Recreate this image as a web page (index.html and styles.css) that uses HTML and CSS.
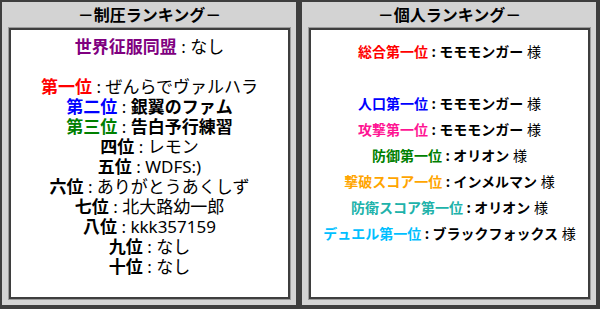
FILE: index.html
```html
<!DOCTYPE html>
<html lang="ja">
<head>
<meta charset="utf-8">
<link rel="stylesheet" href="styles.css">
</head>
<body>
<div class="wrap">
  <section class="panel">
    <h2 class="head">－制圧ランキング－</h2>
    <div class="box box-left">
      <div class="line"><b class="purple">世界征服同盟</b> : なし</div>
      <div class="line">&nbsp;</div>
      <div class="line"><b class="red">第一位</b> : ぜんらでヴァルハラ</div>
      <div class="line"><b class="blue">第二位</b> : <b>銀翼のファム</b></div>
      <div class="line"><b class="green">第三位</b> : <b>告白予行練習</b></div>
      <div class="line"><b>四位</b> : レモン</div>
      <div class="line"><b>五位</b> : WDFS:)</div>
      <div class="line"><b>六位</b> : ありがとうあくしず</div>
      <div class="line"><b>七位</b> : 北大路幼一郎</div>
      <div class="line"><b>八位</b> : kkk357159</div>
      <div class="line"><b>九位</b> : なし</div>
      <div class="line"><b>十位</b> : なし</div>
    </div>
  </section>
  <section class="panel">
    <h2 class="head">－個人ランキング－</h2>
    <div class="box box-right">
      <div class="row"><b class="red">総合第一位</b> <b>: モモモンガー</b> 様</div>
      <div class="row">&nbsp;</div>
      <div class="row"><b class="blue">人口第一位</b> <b>: モモモンガー</b> 様</div>
      <div class="row"><b class="pink">攻撃第一位</b> <b>: モモモンガー</b> 様</div>
      <div class="row"><b class="green">防御第一位</b> <b>: オリオン</b> 様</div>
      <div class="row"><b class="orange">撃破スコア一位</b> <b>: インメルマン</b> 様</div>
      <div class="row"><b class="teal">防衛スコア第一位</b> <b>: オリオン</b> 様</div>
      <div class="row"><b class="sky">デュエル第一位</b> <b>: ブラックフォックス</b> 様</div>
    </div>
  </section>
</div>
</body>
</html>
```
FILE: styles.css
```css
html, body {
  margin: 0;
  padding: 0;
  background: #ffffff;
}
body {
  font-family: "Noto Sans", "Noto Sans CJK JP", sans-serif;
  color: #000;
}
.wrap {
  display: flex;
  width: 600px;
  height: 309px;
}
.panel {
  box-sizing: border-box;
  width: 300px;
  height: 309px;
  border-style: solid;
  border-color: #3e3e3e;
  border-width: 2px 4px 4px 2px;
  background: #d3d3d3;
  padding: 0 5px 5px 6px;
  display: flex;
  flex-direction: column;
}
.head {
  margin: 0;
  height: 25px;
  line-height: 25px;
  font-size: 16px;
  font-weight: bold;
  text-align: center;
  font-family: "Noto Sans CJK JP", sans-serif;
}
.box {
  flex: 1;
  margin: 1px;
  background: #fff;
  border: 2px solid #3e3e3e;
  box-shadow: 0 0 0 1px #9a9a9a;
  text-align: center;
}
.box-left {
  padding-top: 7px;
  font-size: 17px;
  line-height: 20px;
}
.box-right {
  padding-top: 9px;
  font-size: 14px;
  line-height: 26px;
}
.line, .row {
  white-space: nowrap;
}
b {
  font-weight: bold;
}
.purple { color: #800080; }
.red { color: #ff0000; }
.blue { color: #0000ff; }
.green { color: #008000; }
.pink { color: #ff1493; }
.orange { color: #ffa500; }
.teal { color: #20b2aa; }
.sky { color: #00bfff; }
```
